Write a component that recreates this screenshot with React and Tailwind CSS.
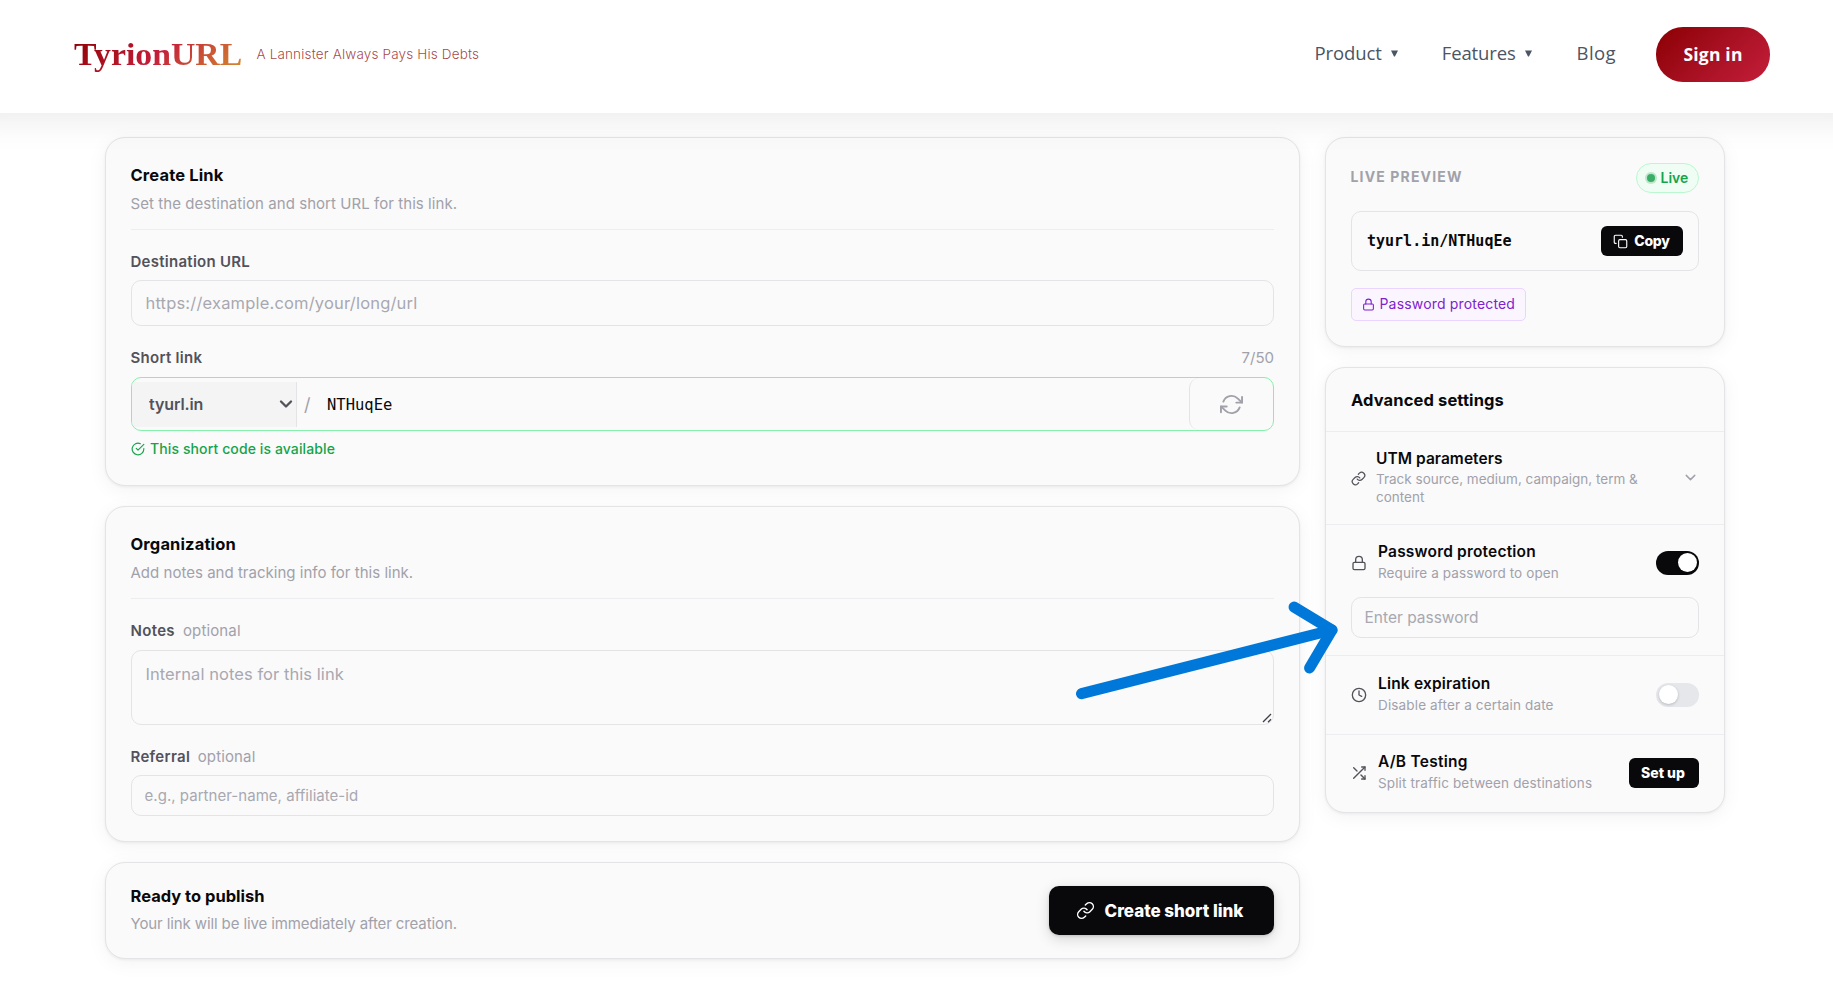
import { useState } from 'react';
import { FiLink, FiLock, FiClock, FiShuffle, FiCopy, FiCheckCircle, FiChevronDown, FiRefreshCw } from 'react-icons/fi';

const cardClass = 'rounded-[20px] border border-[#e4e4e7] bg-[#fafafa] shadow-[0_1px_3px_rgba(0,0,0,0.06),0_4px_20px_rgba(0,0,0,0.05)]';
const inputClass = 'w-full rounded-[10px] border border-[#e4e4e7] bg-[#fafafa] text-[#09090b] placeholder:text-[#a8a8b1] placeholder:opacity-100 outline-none';

function Caret() {
  return (
    <svg width="7" height="7" viewBox="0 0 6 6" className="ml-[9px]">
      <path d="M0 0.5h6L3.4 5.5h-.8z" fill="#4b5563" />
    </svg>
  );
}

function Header() {
  return (
    <header className="relative z-10 h-[113px] bg-white flex items-start justify-between pl-[74px] pr-[63px] shadow-[0_-24px_32px_32px_rgba(0,0,0,0.08)]">
      <div className="flex items-center pt-[34px]">
        <span className="origin-left scale-x-[1.055] bg-[linear-gradient(135deg,#8b0000_0%,#c41e3a_50%,#d4922e_100%)] bg-clip-text text-transparent font-['Liberation_Serif',serif] font-bold text-[32px] leading-[40px]">
          TyrionURL
        </span>
        <span className="ml-[23px] font-[Inter,sans-serif] font-light text-[13.5px] leading-5 tracking-[0.16px] text-[#8b0000]/75">
          A Lannister Always Pays His Debts
        </span>
      </div>
      <nav className="flex items-center pt-[27px] font-['Open_Sans',sans-serif] text-[18.5px] leading-6 text-[#4b5563]">
        <a className="flex items-center pb-[3px] tracking-[-0.08px]">Product<Caret /></a>
        <a className="flex items-center pb-[3px] ml-[44px] tracking-[-0.14px]">Features<Caret /></a>
        <a className="pb-[3px] ml-[45px] tracking-[0.4px]">Blog</a>
        <button className="ml-[40px] w-[114px] h-[55px] rounded-[27px] bg-linear-135 from-[#8b0000] to-[#c41e3a] pb-[1px] text-white font-bold text-[17.5px] tracking-[0.2px]">
          Sign in
        </button>
      </nav>
    </header>
  );
}

function CardHeading({ title, subtitle, titleTracking, subTracking }) {
  return (
    <div className="border-b border-[#ededf0] pb-[15px]">
      <h2 className={`-ml-[0.5px] font-bold text-[16.5px] leading-6 text-[#09090b] ${titleTracking}`}>{title}</h2>
      <p className={`-ml-[0.5px] mt-[7px] text-[15px] leading-5 text-[#a1a1aa] ${subTracking}`}>{subtitle}</p>
    </div>
  );
}

function SettingText({ title, subtitle, titleTracking, subTracking }) {
  return (
    <div className="flex-1 ml-[11px] pb-px">
      <div className={`font-semibold text-[15.5px] leading-5 text-[#09090b] ${titleTracking}`}>{title}</div>
      <div className={`mt-[2px] text-[13.5px] leading-[18px] text-[#a1a1aa] ${subTracking}`}>{subtitle}</div>
    </div>
  );
}

function Toggle({ on, onClick }) {
  return (
    <button
      onClick={onClick}
      className={`w-[43px] h-6 rounded-full p-[2.5px] flex items-center ${on ? 'bg-[#09090b] justify-end' : 'bg-[#e5e7eb] justify-start'}`}
    >
      <span className="size-[19px] rounded-full bg-white shadow-[0_1px_3px_rgba(0,0,0,0.2)]"></span>
    </button>
  );
}

function CreateLinkCard() {
  const [code, setCode] = useState('NTHuqEe');

  return (
    <section className={`${cardClass} px-[25px] pt-[25px] h-[349px]`}>
      <CardHeading
        title="Create Link"
        subtitle="Set the destination and short URL for this link."
        titleTracking="tracking-[0.15px]"
        subTracking="tracking-[0.06px]"
      />

      <label className="block -ml-[0.5px] mt-[22px] font-semibold text-[15px] leading-5 tracking-[0.27px] text-[#52525b]">Destination URL</label>
      <input
        type="url"
        placeholder="https://example.com/your/long/url"
        className={`${inputClass} block mt-2 h-[46px] px-[13.5px] text-[16.5px] tracking-[0.18px]`}
      />

      <div className="flex items-center justify-between mt-[22px] leading-5 text-[15px]">
        <label className="-ml-[0.5px] font-semibold tracking-[0.28px] text-[#52525b]">Short link</label>
        <span className="text-[#a1a1aa]">{code.length}/50</span>
      </div>
      <div className="flex items-center mt-[9px] h-[54px] rounded-[10px] border border-[#86efac] overflow-hidden">
        <div className="flex items-center w-[165px] h-[45px] bg-[#f4f4f5] border-r border-[#e4e4e7]">
          <select className="flex-1 appearance-none pl-[17px] pb-px font-semibold text-[16px] tracking-[-0.1px] text-[#52525b] outline-none">
            <option>tyurl.in</option>
          </select>
          <FiChevronDown size={20} strokeWidth={2.8} className="text-[#52525b]" />
        </div>
        <span className="ml-[7px] w-[15px] text-[18px] text-[#a1a1aa]">/</span>
        <input
          value={code}
          onChange={e => setCode(e.target.value)}
          className="flex-1 pl-[8px] pt-[4px] font-['DejaVu_Sans_Mono',monospace] text-[15.5px] text-[#09090b] outline-none"
        />
        <button className="w-[84px] h-[52px] rounded-[10px] border-l border-[#e4e4e7] flex items-center justify-center text-[#a1a1aa]">
          <FiRefreshCw size={23} />
        </button>
      </div>
      <div className="flex items-center gap-[5px] mt-[9px] font-medium text-[14px] leading-[18px] tracking-[0.11px] text-[#16a34a]">
        <FiCheckCircle size={14} />
        This short code is available
      </div>
    </section>
  );
}

function OrganizationCard() {
  return (
    <section className={`${cardClass} px-[25px] pt-[25px] h-[336px]`}>
      <CardHeading
        title="Organization"
        subtitle="Add notes and tracking info for this link."
        titleTracking="tracking-[0.14px]"
        subTracking="tracking-[0.02px]"
      />

      <label className="flex gap-[8px] -ml-[0.5px] mt-[22px] text-[15px] leading-5">
        <span className="font-semibold tracking-[0.33px] text-[#52525b]">Notes</span>
        <span className="tracking-[0.14px] text-[#a1a1aa]">optional</span>
      </label>
      <div className="relative mt-[9px]">
        <textarea
          placeholder="Internal notes for this link"
          className={`${inputClass} block resize-none h-[75px] px-[13.5px] py-[11px] text-[16.5px] leading-6 tracking-[0.06px]`}
        />
        <svg className="absolute right-[2px] bottom-[2px]" width="10" height="10" viewBox="0 0 10 10" stroke="#3f3f46" strokeWidth="1.3">
          <path d="M1 9L9 1M6 9.2L9 6.2" />
        </svg>
      </div>

      <label className="flex gap-[7.5px] -ml-[0.5px] mt-[22px] text-[15px] leading-5">
        <span className="font-semibold tracking-[0.3px] text-[#52525b]">Referral</span>
        <span className="tracking-[0.14px] text-[#a1a1aa]">optional</span>
      </label>
      <input
        placeholder="e.g., partner-name, affiliate-id"
        className={`${inputClass} block mt-2 h-[41px] px-[12.5px] text-[15px] tracking-[0.04px]`}
      />
    </section>
  );
}

function PublishCard() {
  return (
    <section className={`${cardClass} flex items-center justify-between px-[25px] h-[97px]`}>
      <div className="-ml-[0.5px] pb-[3px]">
        <h2 className="font-bold text-[16.5px] leading-6 text-[#09090b]">Ready to publish</h2>
        <p className="mt-[6px] text-[15px] leading-5 tracking-[-0.11px] text-[#a1a1aa]">Your link will be live immediately after creation.</p>
      </div>
      <button className="flex items-center justify-center gap-[10px] w-[225px] h-[49px] pr-[4px] rounded-[10px] bg-[#09090b] text-white font-extrabold text-[17px] tracking-[-0.02px] shadow-[0_1px_3px_rgba(0,0,0,0.15),0_4px_14px_rgba(0,0,0,0.15)]">
        <FiLink size={19} strokeWidth={1.8} />
        <span className="pt-[2px]">Create short link</span>
      </button>
    </section>
  );
}

function LivePreview() {
  return (
    <section className={`${cardClass} px-[25px] pt-[25px] h-[210px]`}>
      <div className="flex items-start justify-between">
        <span className="mt-[4px] -ml-[0.5px] font-bold text-[14px] leading-5 tracking-[1.15px] text-[#a1a1aa]">LIVE PREVIEW</span>
        <span className="flex items-center w-[63px] h-[30px] pl-[7.5px] gap-[4px] rounded-full border border-[#bbf7d0] bg-[#f0fdf4] font-semibold text-[14px] text-[#16a34a]">
          <span className="flex items-center justify-center size-[12px] rounded-full bg-[#bfe6cd]">
            <span className="size-[8px] rounded-full bg-[#3aae66]"></span>
          </span>
          <span className="pb-px">Live</span>
        </span>
      </div>
      <div className="flex items-center justify-between mt-[18px] h-[60px] rounded-[10px] border border-[#e4e4e7] pl-[15px] pr-[15px]">
        <span className="font-['DejaVu_Sans_Mono',monospace] font-bold text-[15px] text-[#09090b]">tyurl.in/NTHuqEe</span>
        <button className="flex items-center justify-center gap-[6px] w-[82px] h-[30px] pr-px rounded-[6px] bg-[#09090b] text-white font-extrabold text-[14px] tracking-[-0.2px]">
          <FiCopy size={15} strokeWidth={1.8} />
          <span className="pb-px">Copy</span>
        </button>
      </div>
      <span className="flex items-center gap-[4.5px] mt-[17px] w-[175px] h-[33px] pl-[10px] rounded-[5px] border border-[#e9d5ff] bg-[#faf5ff] text-[14px] tracking-[0.17px] text-[#7e22ce]">
        <FiLock size={13} />
        <span className="pb-[2px]">Password protected</span>
      </span>
    </section>
  );
}

function AdvancedSettings() {
  const [passwordOn, setPasswordOn] = useState(true);
  const [expirationOn, setExpirationOn] = useState(false);

  return (
    <section className={`${cardClass} h-[446px] divide-y divide-[#ededf0]`}>
      <div className="h-[64px] px-[25px] pt-px flex items-center font-bold text-[16.5px] tracking-[0.12px] text-[#09090b]">
        Advanced settings
      </div>

      <div className="h-[93px] px-[25px] flex items-center">
        <FiLink size={15} className="text-[#52525b]" />
        <div className="flex-1 ml-[10px] pb-px">
          <div className="font-semibold text-[15.5px] leading-5 tracking-[0.05px] text-[#09090b]">UTM parameters</div>
          <div className="mt-px w-[285px] text-[13.5px] leading-[18px] text-[#a1a1aa]">
            Track source, medium, campaign, term &amp; content
          </div>
        </div>
        <FiChevronDown size={17} className="mb-px text-[#a1a1aa]" />
      </div>

      <div className="h-[131px] px-[25px] pt-[17px]">
        <div className="flex items-center">
          <FiLock size={16} className="text-[#52525b]" />
          <SettingText
            title="Password protection"
            subtitle="Require a password to open"
            titleTracking="tracking-[0.19px]"
            subTracking="tracking-[0.1px]"
          />
          <Toggle on={passwordOn} onClick={() => setPasswordOn(!passwordOn)} />
        </div>
        <input
          type="password"
          placeholder="Enter password"
          className={`${inputClass} block mt-[14px] h-[41px] px-[12.5px] text-[15.5px]`}
        />
      </div>

      <div className="h-[79px] px-[25px] pt-[18px]">
        <div className="flex items-center">
          <FiClock size={16} className="text-[#52525b]" />
          <SettingText
            title="Link expiration"
            subtitle="Disable after a certain date"
            titleTracking="tracking-[0.18px]"
            subTracking="tracking-[0.15px]"
          />
          <Toggle on={expirationOn} onClick={() => setExpirationOn(!expirationOn)} />
        </div>
      </div>

      <div className="px-[25px] pt-[17px]">
        <div className="flex items-center">
          <FiShuffle size={16} className="text-[#52525b]" />
          <SettingText
            title="A/B Testing"
            subtitle="Split traffic between destinations"
            titleTracking="tracking-[0.25px]"
            subTracking="tracking-[0.14px]"
          />
          <button className="w-[70px] h-[30px] pr-[2px] rounded-[6px] bg-[#09090b] text-white font-extrabold text-[14px]">Set up</button>
        </div>
      </div>
    </section>
  );
}

function PointerArrow() {
  return (
    <svg
      className="absolute left-[1070px] top-[590px] z-20 pointer-events-none"
      width="280"
      height="120"
      viewBox="1070 590 280 120"
      fill="none"
      stroke="#0078d9"
      strokeWidth="11"
      strokeLinecap="round"
      strokeLinejoin="round"
    >
      <path d="M1081.5 693.7L1332 630" />
      <path d="M1294 607L1332 630L1309.5 668" />
    </svg>
  );
}

export default function App() {
  return (
    <div className="relative h-[990px] overflow-hidden bg-white font-[Inter,sans-serif]">
      <Header />
      <main className="flex items-start gap-[25px] pl-[105px] pt-6">
        <div className="flex flex-col gap-5 w-[1195px]">
          <CreateLinkCard />
          <OrganizationCard />
          <PublishCard />
        </div>
        <aside className="flex flex-col gap-5 w-[400px]">
          <LivePreview />
          <AdvancedSettings />
        </aside>
      </main>
      <PointerArrow />
    </div>
  );
}
